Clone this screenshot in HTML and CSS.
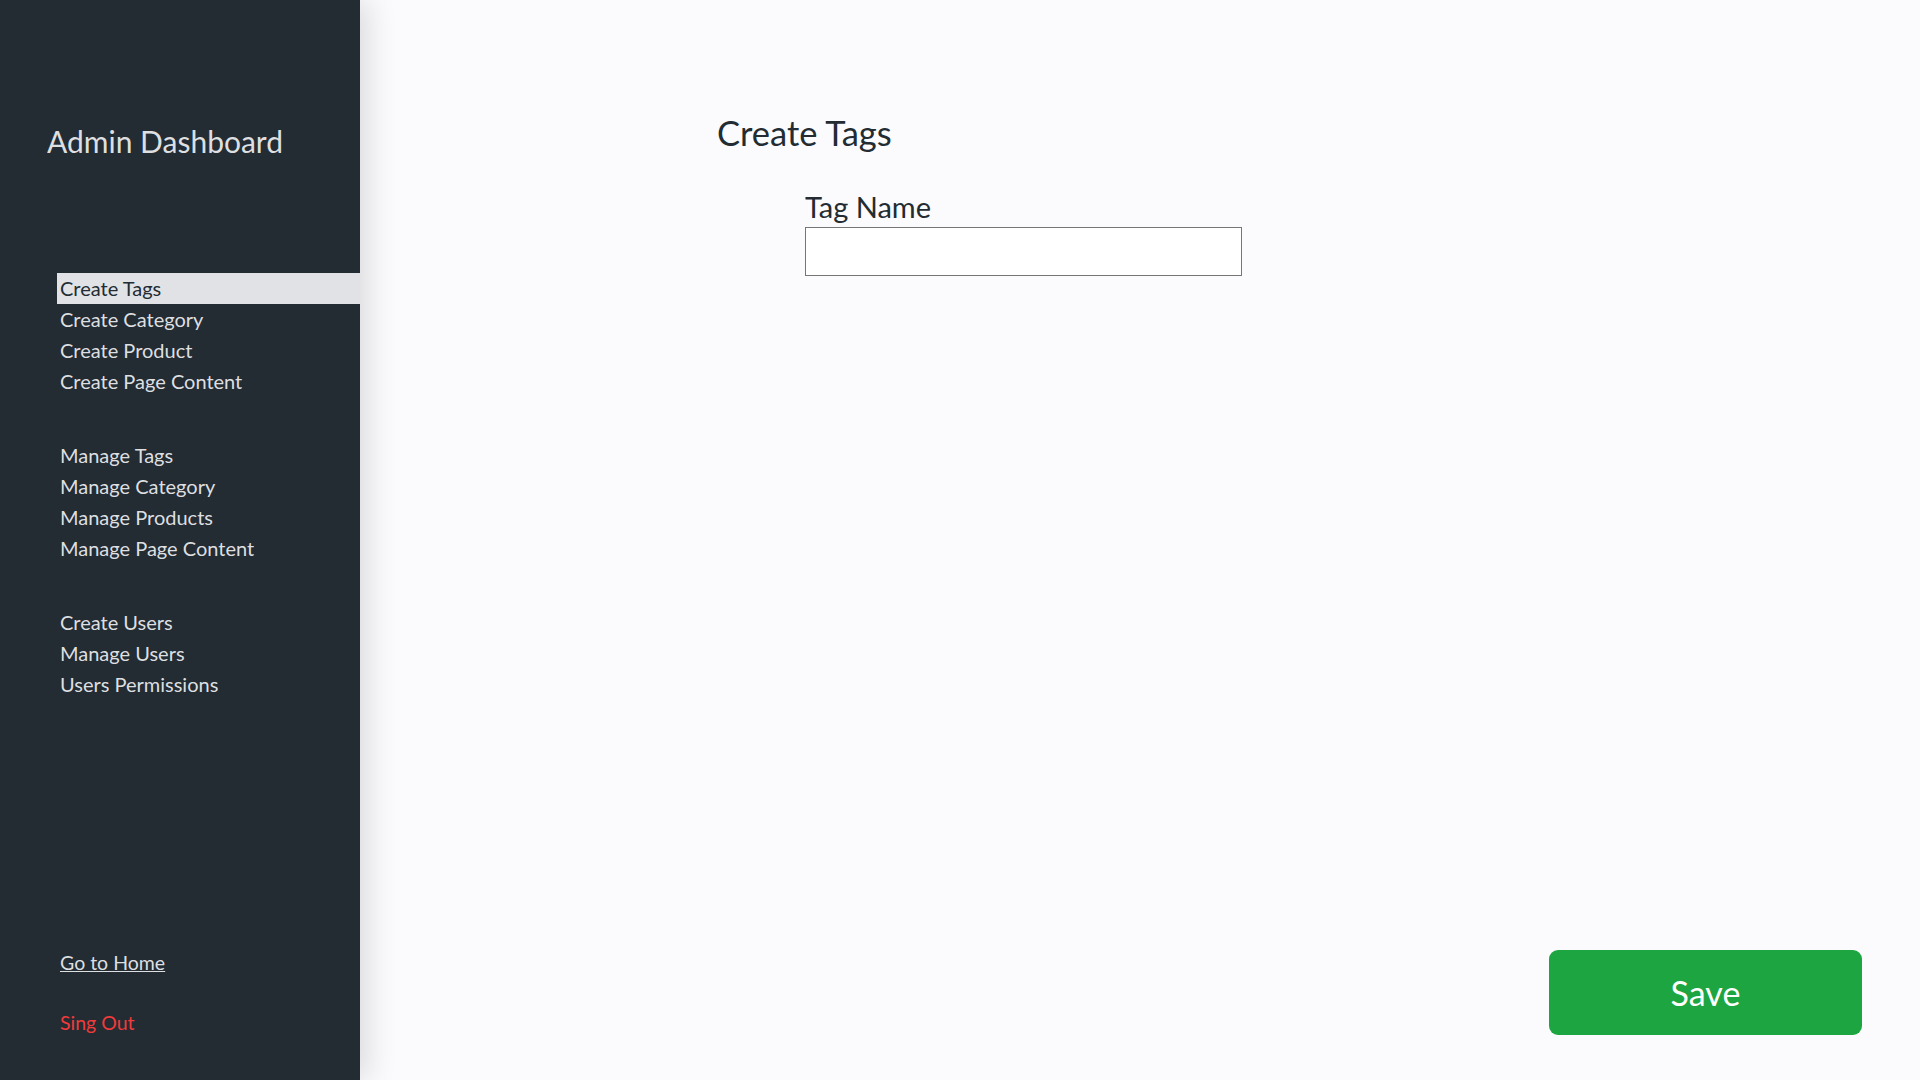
FILE: index.html
```html
<!DOCTYPE html>
<html lang="en">
<head>
<meta charset="utf-8">
<title>Admin Dashboard</title>
<link rel="stylesheet" href="styles.css">
</head>
<body>
<div class="layout">
  <aside class="sidebar">
    <h1 class="brand">Admin Dashboard</h1>
    <nav class="nav">
      <ul class="nav-group">
        <li class="nav-item active">Create Tags</li>
        <li class="nav-item">Create Category</li>
        <li class="nav-item">Create Product</li>
        <li class="nav-item">Create Page Content</li>
      </ul>
      <ul class="nav-group">
        <li class="nav-item">Manage Tags</li>
        <li class="nav-item">Manage Category</li>
        <li class="nav-item">Manage Products</li>
        <li class="nav-item">Manage Page Content</li>
      </ul>
      <ul class="nav-group">
        <li class="nav-item">Create Users</li>
        <li class="nav-item">Manage Users</li>
        <li class="nav-item">Users Permissions</li>
      </ul>
    </nav>
    <div class="sidebar-footer">
      <a class="home-link" href="#">Go to Home</a>
      <a class="signout-link" href="#">Sing Out</a>
    </div>
  </aside>
  <main class="main">
    <h2 class="page-title">Create Tags</h2>
    <form class="form">
      <label class="field-label" for="tagName">Tag Name</label>
      <input class="field-input" id="tagName" type="text">
    </form>
    <button class="save-btn" type="button">Save</button>
  </main>
</div>
</body>
</html>
```
FILE: styles.css
```css
* { box-sizing: border-box; }
html, body {
  margin: 0;
  padding: 0;
  height: 100%;
}
body {
  font-family: Lato, "Open Sans", sans-serif;
  background: #fbfbfe;
  color: #222c32;
  overflow: hidden;
}
.layout {
  display: flex;
  height: 1080px;
}
.sidebar {
  width: 360px;
  flex: 0 0 360px;
  background: #222c32;
  color: #dedfe1;
  display: flex;
  flex-direction: column;
  box-shadow: 8px 0 28px rgba(0, 0, 0, 0.13);
  position: relative;
  z-index: 1;
}
.brand {
  margin: 123px 0 0 47px;
  font-size: 30px;
  font-weight: 400;
  line-height: 36px;
  color: #dedfe1;
}
.nav {
  margin-top: 114px;
  margin-left: 57px;
}
.nav-group {
  list-style: none;
  margin: 0 0 42.5px 0;
  padding: 0;
}
.nav-item {
  font-size: 20px;
  line-height: 24px;
  padding: 3px 0 4.1px 3px;
  color: #dedfe1;
}
.nav-item.active {
  background: #e1e2e6;
  color: #222c32;
}
.sidebar-footer {
  margin-top: auto;
  margin-left: 60px;
  padding-bottom: 45px;
  display: flex;
  flex-direction: column;
  align-items: flex-start;
  gap: 36.5px;
}
.home-link, .signout-link {
  font-size: 19.5px;
  line-height: 24px;
}
.home-link {
  color: #dedfe1;
  text-decoration: underline;
}
.signout-link {
  color: #ef3b3b;
  text-decoration: none;
}
.main {
  flex: 1;
  display: flex;
  flex-direction: column;
  padding: 113px 58px 45px 357px;
}
.page-title {
  margin: 0;
  font-size: 34.5px;
  font-weight: 400;
  line-height: 40px;
  color: #222c32;
}
.form {
  margin: 37px 0 0 88px;
  display: flex;
  flex-direction: column;
  align-items: flex-start;
}
.field-label {
  font-size: 29px;
  line-height: 34.8px;
  color: #222c32;
}
.field-input {
  margin-top: 2px;
  width: 437px;
  height: 49px;
  border: 1px solid #767676;
  background: #ffffff;
  font-family: inherit;
  font-size: 20px;
  padding: 0 8px;
  outline: none;
}
.save-btn {
  margin-top: auto;
  align-self: flex-end;
  width: 313px;
  height: 85px;
  background: #1ca540;
  color: #ffffff;
  border: none;
  border-radius: 9px;
  font-family: Lato, "Open Sans", sans-serif;
  font-size: 34px;
  cursor: pointer;
}
```
